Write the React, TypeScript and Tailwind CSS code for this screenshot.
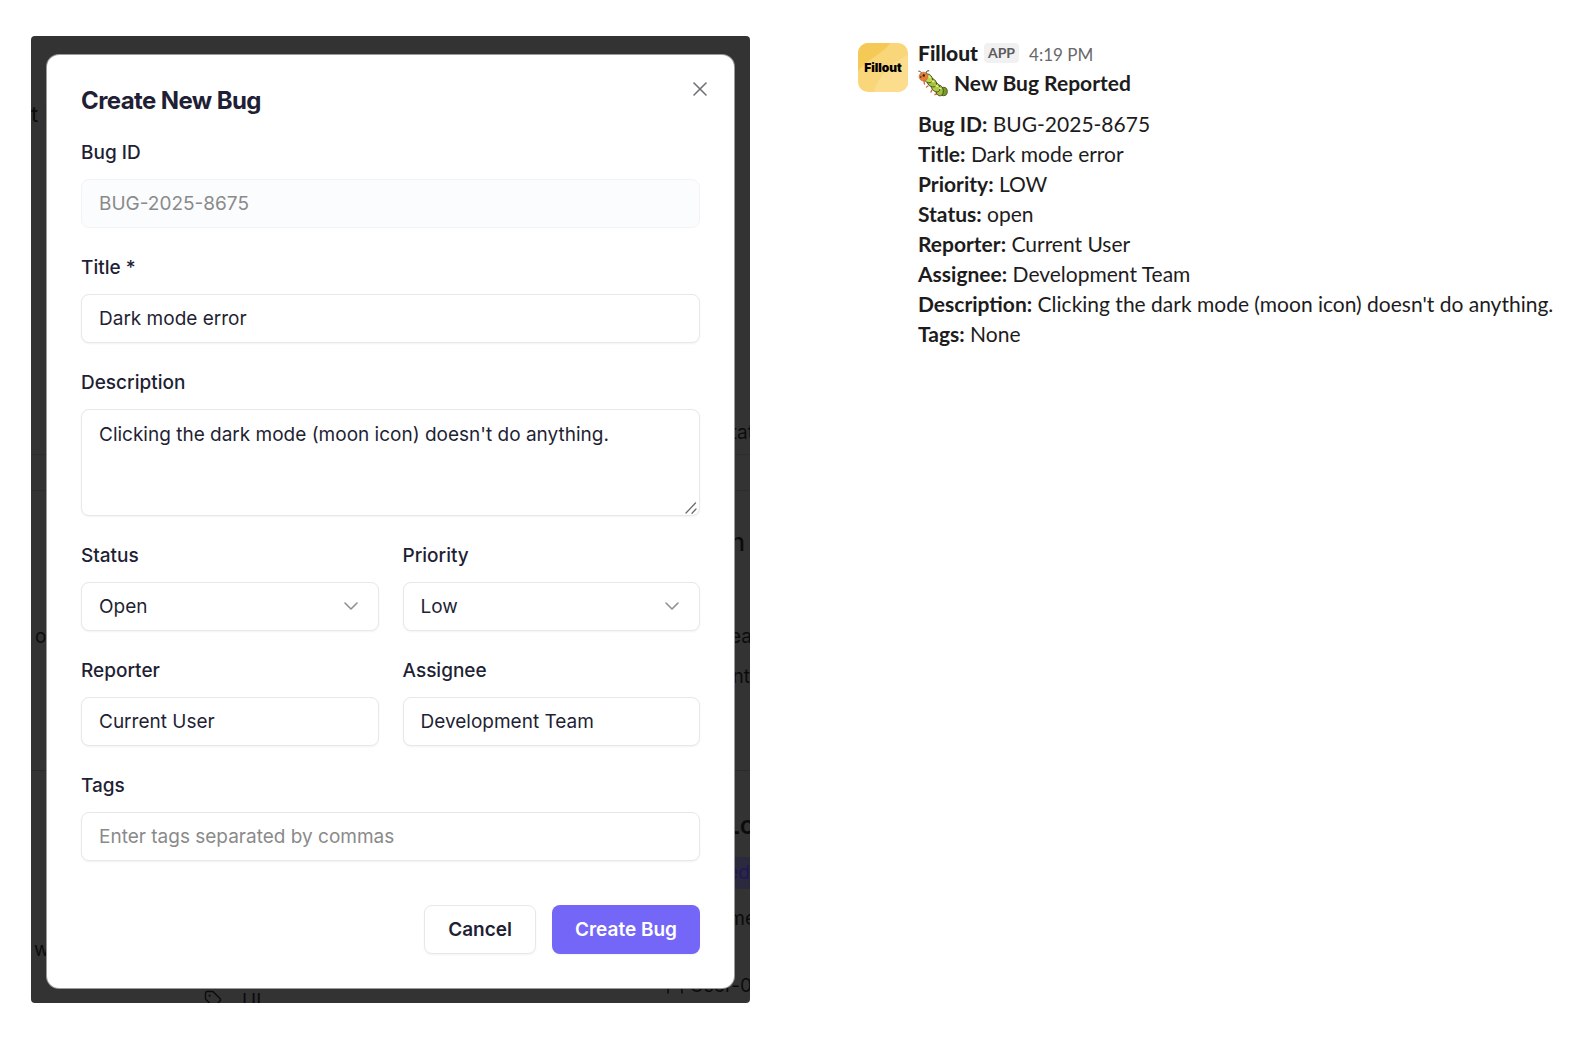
import React, { useState } from "react";
import { ChevronDown, Tag, User, X } from "lucide-react";

const labelClass = "block text-[19px] leading-7 font-medium text-[#1f1f35]";
const fieldClass =
  "w-full rounded-lg border border-[#e6e8ec] bg-white px-[17px] text-[19px] leading-7 text-[#1f1f35] shadow-xs placeholder:text-[#8a8a8a]";

const reportRows = [
  { name: "Bug ID", value: "BUG-2025-8675" },
  { name: "Title", value: "Dark mode error" },
  { name: "Priority", value: "LOW" },
  { name: "Status", value: "open" },
  { name: "Reporter", value: "Current User" },
  { name: "Assignee", value: "Development Team" },
  { name: "Description", value: "Clicking the dark mode (moon icon) doesn't do anything." },
  { name: "Tags", value: "None" },
];

function Field({ id, label, children }: { id: string; label: string; children: React.ReactNode }) {
  return (
    <div className="flex flex-col gap-3">
      <label htmlFor={id} className={labelClass}>
        {label}
      </label>
      {children}
    </div>
  );
}

function SelectField({ id, label, options }: { id: string; label: string; options: string[] }) {
  const [value, setValue] = useState(options[0]);
  return (
    <Field id={id} label={label}>
      <div className="relative">
        <select
          id={id}
          value={value}
          onChange={(e) => setValue(e.target.value)}
          className={`${fieldClass} h-[49px] appearance-none`}
        >
          {options.map((o) => (
            <option key={o}>{o}</option>
          ))}
        </select>
        <ChevronDown
          className="pointer-events-none absolute top-3 right-4 size-6 text-[#8f8f94]"
          strokeWidth={1.6}
        />
      </div>
    </Field>
  );
}

// The dimmed page that stays visible around the dialog
function Backdrop() {
  return (
    <div aria-hidden="true" className="absolute inset-0 text-[19px] leading-7 text-[#0b0b0c]">
      <div className="absolute top-[418px] h-px w-full bg-[#2d2d2d]" />
      <div className="absolute top-[454px] h-px w-full bg-[#2d2d2d]" />
      <div className="absolute top-[734px] h-px w-full bg-[#2a2a2a]" />
      <span className="absolute top-[64px] left-0 text-[22px]">t i</span>
      <span className="absolute top-[587px] left-[4px]">o</span>
      <span className="absolute top-[900px] left-[3px]">w</span>
      <span className="absolute top-[383px] right-[-4px]">tat</span>
      <span className="absolute top-[492px] right-[5px] text-[25px] font-medium">n</span>
      <span className="absolute top-[587px] right-[-2px]">ea</span>
      <span className="absolute top-[627px] right-0">nt</span>
      <span className="absolute top-[775px] right-[-5px] text-[25px] font-semibold">Lo</span>
      <span className="absolute top-[821px] right-0 bg-[#2b2a3d] pl-6 leading-8 text-[#1d1857]">ed</span>
      <span className="absolute top-[869px] right-[-6px]">me</span>
      <User className="absolute top-[936px] left-[632px] size-6" strokeWidth={1.5} />
      <span className="absolute top-[936px] right-[-14px]">User-00</span>
      <Tag className="absolute top-[954px] left-[173px] size-[18px]" strokeWidth={1.8} />
      <span className="absolute top-[951px] left-[211px]">UI</span>
    </div>
  );
}

function CreateBugDialog() {
  const [title, setTitle] = useState("Dark mode error");
  const [description, setDescription] = useState("Clicking the dark mode (moon icon) doesn't do anything.");
  const [reporter, setReporter] = useState("Current User");
  const [assignee, setAssignee] = useState("Development Team");
  const [tags, setTags] = useState("");

  return (
    <form
      role="dialog"
      aria-labelledby="dialog-title"
      onSubmit={(e) => e.preventDefault()}
      className="relative rounded-xl bg-white px-[34px] pt-[30px] pb-[34px] ring-1 ring-[#9a9a9a]"
    >
      <h2 id="dialog-title" className="text-2xl leading-8 font-bold tracking-tight text-[#1f1f35]">
        Create New Bug
      </h2>
      <button type="button" aria-label="Close" className="absolute top-[22px] right-[22px] text-[#707074]">
        <X className="size-6" strokeWidth={1.6} />
      </button>

      <div className="mt-[22px] flex flex-col gap-[26px]">
        <Field id="bug-id" label="Bug ID">
          <input
            id="bug-id"
            disabled
            value="BUG-2025-8675"
            className="h-[49px] w-full rounded-lg border border-[#f1f3f6] bg-[#fbfcfe] px-[17px] text-[19px] leading-7 text-[#8a8a8a]"
          />
        </Field>
        <Field id="title" label="Title *">
          <input
            id="title"
            value={title}
            onChange={(e) => setTitle(e.target.value)}
            className={`${fieldClass} h-[49px]`}
          />
        </Field>
        <Field id="description" label="Description">
          <div className="relative">
            <textarea
              id="description"
              value={description}
              onChange={(e) => setDescription(e.target.value)}
              className={`${fieldClass} block h-[107px] resize-none py-[11px]`}
            />
            <svg
              viewBox="0 0 12 12"
              className="pointer-events-none absolute right-[3px] bottom-[2px] size-3"
              stroke="#6b6b6b"
              strokeWidth="1.3"
              strokeLinecap="round"
            >
              <path d="M1 11L10.500 1M7 11.300l4-4.300" />
            </svg>
          </div>
        </Field>
        <div className="grid grid-cols-2 gap-6">
          <SelectField id="status" label="Status" options={["Open", "In Progress", "Closed"]} />
          <SelectField id="priority" label="Priority" options={["Low", "Medium", "High"]} />
        </div>
        <div className="grid grid-cols-2 gap-6">
          <Field id="reporter" label="Reporter">
            <input
              id="reporter"
              value={reporter}
              onChange={(e) => setReporter(e.target.value)}
              className={`${fieldClass} h-[49px]`}
            />
          </Field>
          <Field id="assignee" label="Assignee">
            <input
              id="assignee"
              value={assignee}
              onChange={(e) => setAssignee(e.target.value)}
              className={`${fieldClass} h-[49px]`}
            />
          </Field>
        </div>
        <Field id="tags" label="Tags">
          <input
            id="tags"
            placeholder="Enter tags separated by commas"
            value={tags}
            onChange={(e) => setTags(e.target.value)}
            className={`${fieldClass} h-[49px]`}
          />
        </Field>
      </div>

      <div className="mt-11 flex justify-end gap-4 text-[19px] leading-7 font-semibold">
        <button
          type="button"
          className="h-[49px] rounded-lg border border-[#e6e8ec] bg-white px-[23px] text-[#1f1f35] shadow-xs"
        >
          Cancel
        </button>
        <button type="submit" className="h-[49px] rounded-lg bg-[#7466f7] px-[23px] text-white shadow-xs">
          Create Bug
        </button>
      </div>
    </form>
  );
}

function FilloutLogo() {
  return (
    <div className="relative flex h-[49px] w-[50px] shrink-0 items-center justify-center overflow-hidden rounded-[10px] bg-[#f9d67a] font-[Inter,sans-serif] text-[12px] font-black text-black">
      <svg viewBox="0 0 50 49" className="absolute inset-0 size-full">
        <path d="M0 0h32C26 10 12 14 0 28z" fill="#f5c955" />
        <path d="M50 12C34 20 20 32 16 49h34z" fill="#fbdd8d" />
      </svg>
      <span className="relative">Fillout</span>
    </div>
  );
}

function Caterpillar() {
  return (
    <svg viewBox="0 0 30 28" className="h-7 w-[30px] shrink-0" role="img" aria-label="bug">
      <g stroke="#3f3a35" strokeWidth="1" fill="none" strokeLinecap="round">
        <path d="M4 5C3 2.500 2 2 .8 2.200M8 4C8.500 2 9.500 1.300 10.800 1.800" />
        <path d="M6 12l.5 3M10 17l-1.500 1M14 21l-1 2M19 25l-2 .5" stroke="#d9604a" strokeWidth="1.400" />
      </g>
      <g stroke="#35451c" strokeWidth=".8">
        <ellipse cx="25.500" cy="22.500" rx="3.800" ry="4.200" fill="#7f9a2a" />
        <ellipse cx="21.500" cy="21.500" rx="3.800" ry="5.400" fill="#a3bf3a" transform="rotate(-10 21.500 21.500)" />
        <ellipse cx="17.500" cy="18" rx="3.900" ry="5.400" fill="#b1cc41" transform="rotate(-35 17.500 18)" />
        <ellipse cx="13.800" cy="13.500" rx="3.900" ry="5.200" fill="#a9c43c" transform="rotate(-50 13.800 13.500)" />
        <ellipse cx="10" cy="9.300" rx="3.900" ry="5" fill="#bdd64c" transform="rotate(-45 10 9.300)" />
      </g>
      <path
        d="M10.500 7.500l1.500 1M14 12l1.800.6M18 16.500l1.600.8M21.500 19l1.300.6"
        stroke="#e6f09c"
        strokeWidth="1.500"
        strokeLinecap="round"
      />
      <circle cx="5.500" cy="7.600" r="4.400" fill="#e57d37" stroke="#b35a26" strokeWidth=".5" />
      <circle cx="5.800" cy="6.500" r="1.200" fill="#2c211b" />
      <circle cx="2.700" cy="8" r=".8" fill="#2c211b" />
    </svg>
  );
}

function SlackMessage() {
  return (
    <article className="flex gap-[10px] pt-[2px] font-[Lato,sans-serif] text-[21px] leading-[30px] whitespace-nowrap text-[#1d1c1d]">
      <div className="pt-[5px]">
        <FilloutLogo />
      </div>
      <div className="min-w-0">
        <header className="flex items-baseline">
          <span className="font-black">Fillout</span>
          <span className="ml-[6px] self-center rounded bg-[#f1f1f1] px-1 text-[14px] leading-5 font-bold text-[#5c5b5d]">
            APP
          </span>
          <time className="ml-[10px] text-[17px] leading-6 text-[#69686a]">4:19 PM</time>
        </header>
        <h3 className="flex items-center gap-[6px] font-bold">
          <Caterpillar />
          New Bug Reported
        </h3>
        <dl className="mt-[11px]">
          {reportRows.map((row) => (
            <div key={row.name}>
              <dt className="inline font-bold">{row.name}:</dt> <dd className="inline">{row.value}</dd>
            </div>
          ))}
        </dl>
      </div>
    </article>
  );
}

export default function App() {
  return (
    <main className="grid min-h-screen grid-cols-[719fr_706fr] items-start gap-[108px] bg-white pt-9 pr-2 pb-9 pl-[31px]">
      <section className="relative overflow-hidden rounded bg-[#333333] px-4 pt-[19px] pb-[15px] font-[Inter,sans-serif]">
        <Backdrop />
        <CreateBugDialog />
      </section>
      <SlackMessage />
    </main>
  );
}
